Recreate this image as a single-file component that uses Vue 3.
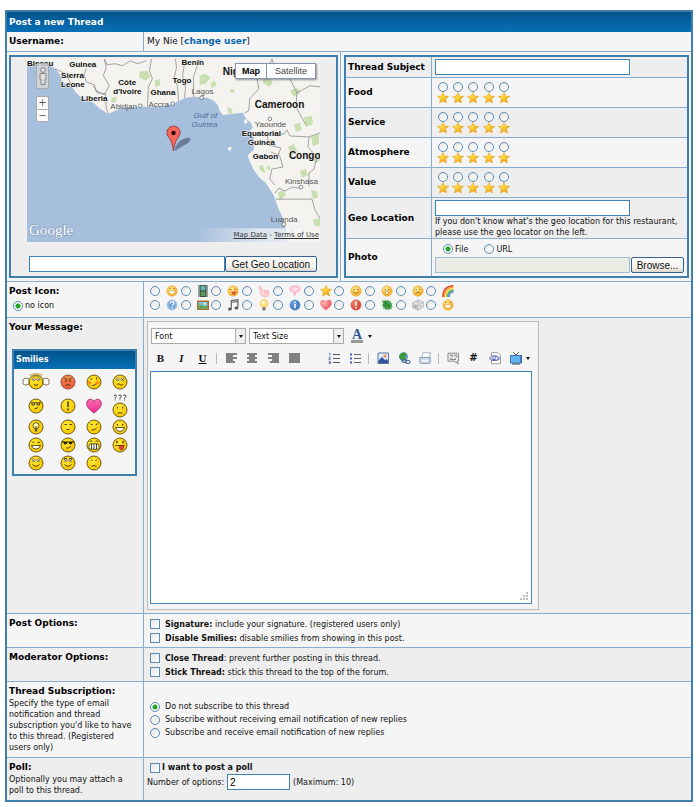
<script setup>
import { ref } from 'vue'

const disc = (fill, stroke) => `<circle cx="6" cy="6" r="5.2" fill="${fill}" stroke="${stroke}" stroke-width=".5"/>`
const faceEyes = '<circle cx="4.2" cy="4.6" r=".7" fill="#8a5a10"/><circle cx="7.8" cy="4.6" r=".7" fill="#8a5a10"/>'
const laugh = disc('url(#gold)', '#e8a020') + '<path d="M3 3.8q1-1 2 0M7 3.8q1-1 2 0" stroke="#a86c10" fill="none" stroke-width=".7"/><path d="M2.5 5.8h7q-.5 3.4-3.5 3.4T2.5 5.8z" fill="#fff" stroke="#c98a1a" stroke-width=".5"/>'
const starPath = '<path d="M6 .2l1.7 3.7 4.1.4-3.1 2.800.9 4L6 9.200l-3.600 1.900.9-4L.2 4.300l4.100-.4z" fill="url(#star)" stroke="#e2a526" stroke-width=".4"/>'

const postIcons = [
  { name: 'Laugh', art: laugh },
  { name: 'Film', art: '<path d="M1.5 0h9v12h-9z" fill="#3c4448"/><path d="M3.6 .8h4.8v4.6H3.6z" fill="#5fb7b0"/><path d="M3.6 6.4h4.8V11H3.6z" fill="#57a05a"/><path d="M2.5 .6v11M9.5 .6v11" stroke="#e8ecec" stroke-width=".9" stroke-dasharray="1 1"/>' },
  { name: 'Tongue', art: disc('url(#gold)', '#e8a020') + '<circle cx="3.8" cy="4.5" r=".8" fill="#8a5a10"/><path d="M7 4.6l2-.8" stroke="#8a5a10" stroke-width=".8"/><path d="M4 6.4h5q.3 3.4-2 3.4T4.800 7.400z" fill="#e0562c"/>' },
  { name: 'Thumbs up', art: '<path d="M1 1.5q1.500-.6 2 .7l1.500 3 4.800.3q1.600.3 1.600 1.500v2.800q-.2 1.600-2 1.600H5q-1.300 0-2-1.300L2.200 7.500z" fill="#fcd3d7" stroke="#f4a8b2" stroke-width=".7"/><path d="M6 7.200h4.500M6 9h4.300" stroke="#f4a8b2" stroke-width=".6"/>' },
  { name: 'Comment', art: '<path d="M6 .8c3 0 5.200 1.300 5.200 3.200S9 7.300 7 7.300L5.500 11 4.800 7.200C2.500 7 .8 5.800.8 4S3 .8 6 .8z" fill="#fcc9d6" stroke="#f3a0b8" stroke-width=".7"/><path d="M3.500 5.500l5-2.500" stroke="#fff" stroke-width="1"/>' },
  { name: 'Star', art: starPath },
  { name: 'Smile', art: disc('url(#gold)', '#e8a020') + faceEyes + '<path d="M3 6.500q3 3.600 6 0" fill="none" stroke="#9c6410" stroke-width=".9"/>' },
  { name: 'Surprised', art: disc('url(#gold)', '#e8a020') + faceEyes + '<ellipse cx="6" cy="7.600" rx="1.700" ry="1.900" fill="#fff3c8" stroke="#a86c10" stroke-width=".6"/>' },
  { name: 'Sad', art: disc('url(#gold)', '#e8a020') + faceEyes + '<path d="M3.400 8.400q2.600-2.600 5.200 0" fill="none" stroke="#9c6410" stroke-width=".9"/>' },
  { name: 'Rainbow', art: '<g fill="none" stroke-width="1.600"><path d="M.8 12C1 5 5 1 11.500.8" stroke="#e2483c"/><path d="M2.300 12C2.500 6 6 2.400 11.500 2.300" stroke="#f59a2c"/><path d="M3.800 12C4 7 7 4 11.500 3.800" stroke="#f6dc4c"/><path d="M5.300 12C5.500 8 8 5.500 11.500 5.300" stroke="#58b455"/><path d="M6.800 12C7 9.500 9 7 11.500 6.800" stroke="#4a86d6"/></g>' },
  { name: 'Question', art: disc('url(#blue)', '#a9c4e2') + '<path d="M4.300 4.600q0-1.700 1.800-1.700 1.700 0 1.700 1.500 0 1-1.700 1.900v.9M6.100 8.200v1.100" fill="none" stroke="#fff" stroke-width="1.200"/>' },
  { name: 'Picture', art: '<path d="M0 1.500h12v9.500H0z" fill="#a8702c"/><path d="M1.600 3h8.800v6.500H1.600z" fill="#7cc6e4"/><path d="M1.600 9.500V7l2.800-1.600L7 7.500l3.400-1v3z" fill="#5faa4c"/><circle cx="7.800" cy="4.800" r="1" fill="#fff6b0"/>' },
  { name: 'Music', art: '<path d="M4.300 9.500v-8l6.600-.8v7.600M4.300 3.300l6.600-.8" fill="none" stroke="#555" stroke-width="1.100"/><ellipse cx="2.900" cy="9.900" rx="1.900" ry="1.500" fill="#555"/><ellipse cx="9.400" cy="8.900" rx="1.900" ry="1.500" fill="#555"/>' },
  { name: 'Idea', art: '<circle cx="6" cy="4.600" r="4" fill="#fde48a" stroke="#eebc48" stroke-width=".6"/><circle cx="5" cy="3.500" r="1.500" fill="#fffbe2"/><path d="M4.400 8.300h3.200v2.400l-.8.900H5.200l-.8-.9z" fill="#7a7668"/>' },
  { name: 'Information', art: disc('url(#deepblue)', '#7aa6d6') + '<path d="M6 2.500v1.400M6 5v4.200" stroke="#fff" stroke-width="1.500"/>' },
  { name: 'Heart', art: '<path d="M6 11.200C1.500 7.600.4 5.800.4 3.900.4 2.200 1.700 1.100 3.200 1.100c1.200 0 2.200.6 2.800 1.800C6.600 1.700 7.600 1.100 8.800 1.100c1.500 0 2.800 1.100 2.800 2.800 0 1.900-1.100 3.700-5.600 7.300z" fill="url(#rose)" stroke="#ee8284" stroke-width=".4"/>' },
  { name: 'Exclamation', art: disc('url(#red)', '#e06a54') + '<path d="M6 2.300v4.200M6 7.800v1.600" stroke="#fff" stroke-width="1.600"/>' },
  { name: 'Leaf', art: '<path d="M1 1l2.200 1 1-1.500L5.500 2 7.200.7l.7 1.800 2-.4-.4 1.900 2 .5-1.100 1.700L12 7.500 10.200 8.300l.5 1.900-2-.4L8 11.500 6.400 10 4.500 11.200 4 9.200l-2.200.2.700-1.900L.7 6.300l1.600-1.200z" fill="#3f9c46"/><path d="M3 3l5.500 5.300M5 2.800v2.500M3 6.300l3 .2M7.800 5v2.500" stroke="#1f6d2b" stroke-width=".6"/>' },
  { name: 'Dice', art: '<path d="M.6 3.800L6.200 1l5.200 2v5L6 11.200.6 8.800z" fill="#e4e4e4" stroke="#a0a0a0" stroke-width=".6"/><path d="M.6 3.800L6 6v5.200L.6 8.800z" fill="#c9c9c9"/><path d="M6 6l5.400-3M6 6v5.200" stroke="#999" stroke-width=".5"/><circle cx="6" cy="3.300" r=".8" fill="#888"/><circle cx="3.300" cy="7.500" r=".8" fill="#777"/><circle cx="8.700" cy="7" r=".8" fill="#999"/>' },
  { name: 'Grin', art: laugh }
]

const ball = '<circle cx="8" cy="8" r="7" fill="url(#ball)" stroke="#6f5a10" stroke-width="1"/>'
const roundEyes = '<g fill="#fff" stroke="#4a3c08" stroke-width=".6"><circle cx="5.700" cy="5.300" r="1.500"/><circle cx="10.300" cy="5.300" r="1.500"/></g><path d="M5.400 5.500h.8M10 5.500h.8" stroke="#222" stroke-width=".9"/>'
const line = (d) => `<path d="${d}" fill="none" stroke="#3d3006" stroke-width=".9"/>`
const dots = '<path d="M5.500 5v1.600M10.500 5v1.600" stroke="#3d3006" stroke-width="1"/>'
const smilies = [
  { name: 'Angel', w: 28, vb: '-6 0 28 16', art: '<path d="M1 5q-5-2-6 1v4q2 2 6 0zM15 5q5-2 6 1v4q-2 2-6 0z" fill="#fff" stroke="#7c6a3c" stroke-width=".9"/>' + ball + '<ellipse cx="8" cy="1.200" rx="6" ry="1.400" fill="none" stroke="#b9942a" stroke-width=".9"/>' + roundEyes + line('M6 10.500q2 1.600 4 0') },
  { name: 'Angry', art: '<circle cx="8" cy="8" r="7" fill="url(#mad)" stroke="#96503c" stroke-width="1"/>' + line('M4.500 4l2.500 2M11.500 4L9 6M5 7h2M9 7h2M5.500 11.500q2.500-2 5 0') },
  { name: 'Blush', art: ball + '<circle cx="3.500" cy="8.800" r="2" fill="#ff9418"/><circle cx="11.500" cy="8.800" r="2" fill="#ff9418"/>' + line('M4.500 5h2M10.500 3.500v2M6 11.500q3 .5 4-2') },
  { name: 'Confused', art: ball + roundEyes + line('M5 10.500q1.500-1.500 3 0t3 0') },
  { name: 'Cool', art: ball + line('M2.500 4.800h11M4 5v2h2.500V5M9 5v2h2.500V5M6.500 11l3.500-1.500') },
  { name: 'Exclaim', art: ball + '<path d="M8 3.500v5.500M8 10.500v2" stroke="#3d3006" stroke-width="1.500"/>' },
  { name: 'Love', art: '<path d="M8 15C2 10.500.7 8 .7 5.300.7 2.900 2.500 1.300 4.500 1.300 6.200 1.300 7.400 2.300 8 3.900c.6-1.600 1.800-2.600 3.500-2.600 2 0 3.800 1.600 3.800 4C15.300 8 14 10.500 8 15z" fill="url(#pink)" stroke="#a02862" stroke-width=".9"/>' },
  { name: 'Huh', h: 24, vb: '0 -8 16 24', art: ball + dots + line('M5.500 11.500q2.500-2 5 0') + '<path d="M2-6q0-1 1.200-1T4.400-5.800q0 1-1.300 1.600v1M3.100-2.500v.9M6.800-6q0-1 1.200-1t1.200 1.200q0 1-1.300 1.600v1M7.900-2.500v.9M11.600-6q0-1 1.200-1T14-5.800q0 1-1.300 1.600v1M12.700-2.500v.9" fill="none" stroke="#444" stroke-width="1"/>' },
  { name: 'Idea', art: ball + '<circle cx="8" cy="6.700" r="3" fill="#fff8b4" stroke="#3d3006" stroke-width=".8"/><path d="M6.800 9.500h2.400v3H6.800z" fill="#555"/>' + line('M8 7v2.500') },
  { name: 'Sleepy', art: ball + line('M4.500 5.500h2.500M9.500 5.500h2.500M6.500 10.500h3') },
  { name: 'Skeptic', art: ball + line('M4.500 5l2.500 1M9.500 6l2.500-1.500M5.500 11q3 .5 5-2') },
  { name: 'Happy', art: ball + dots + '<path d="M3.500 8.500h9q-1 4-4.500 4t-4.500-4z" fill="#fff" stroke="#3d3006" stroke-width=".8"/>' },
  { name: 'Wink', art: ball + line('M4.500 5.500q1-1 2 0M9.500 5.500h2.500') + '<path d="M3.500 8.500h9q-1 3.600-4.500 3.600T3.500 8.500z" fill="#fff" stroke="#3d3006" stroke-width=".8"/>' },
  { name: 'Shades', art: ball + '<path d="M1.500 4.500h13v1H12.500q-.4 2-2 2T8.700 5.500H7.300q-.3 2-1.900 2t-2-2H1.500z" fill="#221c08"/>' + line('M6 11q3 .8 5-1.800') },
  { name: 'Grin', art: ball + line('M4 4.500q1.200-1.200 2.500 0M9.500 4.500q1.200-1.200 2.500 0') + '<rect x="3" y="6.800" width="10" height="5.500" rx="2" fill="#fff" stroke="#3d3006" stroke-width=".8"/>' + line('M5.500 7v5M8 7v5M10.500 7v5') },
  { name: 'Tongue', art: ball + line('M4 4l2 1.200-2 1M12 4l-2 1.200 2 1M3.500 8.500h9') + '<path d="M7.500 8.500h4v2.800q-.5 1.700-2 1.700t-2-1.700z" fill="#e23c3c" stroke="#7d1c1c" stroke-width=".6"/>' },
  { name: 'Roll eyes', art: ball + roundEyes + line('M4.500 9.500q3.500 3.500 7 0') },
  { name: 'Shifty', art: ball + roundEyes + line('M4 3.600h3M9 3.600h3M4.500 9.500q3.500 3.500 7 0') },
  { name: 'Sad', art: ball + line('M5.500 4.500l1 1.500M10.500 4.500l-1 1.500M5.500 11.500q2.500-2.200 5 0') }
]

const bars = (rows) => rows.map(([x, w], i) => `<path d="M${x} ${2 + i * 2}h${w}" stroke="#333" stroke-width="1.200"/>`).join('')
const tools = [
  { name: 'Bold', text: 'B', cls: 'bold' },
  { name: 'Italic', text: 'I', cls: 'italic' },
  { name: 'Underline', text: 'U', cls: 'under' },
  { sep: true },
  { name: 'Align left', art: bars([[1, 11], [1, 7], [1, 11], [1, 7], [1, 9]]) },
  { name: 'Align center', art: bars([[1, 10], [3, 6], [1, 10], [3, 6], [1, 10]]) },
  { name: 'Align right', art: bars([[1, 11], [5, 7], [1, 11], [5, 7], [3, 9]]) },
  { name: 'Justify', art: bars([[1, 11], [1, 11], [1, 11], [1, 11], [1, 11]]) },
  { gap: true },
  { name: 'Numbered list', art: '<path d="M5 2.500h7M5 6.500h7M5 10.500h7" stroke="#555" stroke-width="1.100"/><path d="M1 1.200h1v2.500M.6 5.300h1.800L.8 7.500h1.800M.6 9.300h1.800v2.400H.6M1 10.500h1.200" fill="none" stroke="#3e62b4" stroke-width=".8"/>' },
  { name: 'Bulleted list', art: '<path d="M5 2.500h7M5 6.500h7M5 10.500h7" stroke="#666" stroke-width="1.100"/><path d="M1 1.500h2v2H1zM1 5.500h2v2H1zM1 9.500h2v2H1z" fill="#3e62b4"/>' },
  { sep: true },
  { name: 'Insert image', art: '<path d="M1 1h10.500v10.500H1z" fill="#dfeafa" stroke="#4c6695" stroke-width=".9"/><path d="M1.500 11V8.500L5 5l3 3 1.500-1L11 9v2z" fill="#31559c"/><circle cx="8" cy="4" r="1.600" fill="#e88a4a"/>' },
  { name: 'Insert link', art: '<circle cx="5.500" cy="4.800" r="4.500" fill="#5c9fd0"/><path d="M1.500 3Q4-.5 7.500.8L9 3 6.500 4.500 7.500 7 4.500 9Q2 7.500 1.200 5z" fill="#3d9b37"/><g fill="none" stroke="#526f93" stroke-width="1.200"><rect x="4" y="7.500" width="4.500" height="2.800" rx="1.400"/><rect x="7.500" y="8.500" width="4.500" height="2.800" rx="1.400"/></g>' },
  { name: 'Insert e-mail', art: '<path d="M4 .8h7.500l-1.500 6H2.500z" fill="#fff" stroke="#7890b0" stroke-width=".7"/><path d="M.8 5.500h10.500v4.500q0 1.500-1.500 1.500H2.300Q.8 11.500.8 10z" fill="#cdd9ea" stroke="#7a8ba6" stroke-width=".8"/><path d="M2.500 8.500h6.500" stroke="#fff" stroke-width="1.300"/>' },
  { sep: true },
  { name: 'Quote', art: '<path d="M1 1.200h10.500v8H10l1.500 2.600L7 9.200H1z" fill="#eee" stroke="#777" stroke-width=".8"/><path d="M2.500 3.200h3v1.500l-2 2M6.800 3.200h3v1.500l-2 2M3 7.500h6" fill="none" stroke="#777" stroke-width=".9"/>' },
  { name: 'Code', text: '#', cls: 'hash' },
  { name: 'PHP code', art: '<path d="M2.500.7h6.500l2.500 2.500v8.500h-9z" fill="#fff" stroke="#8a8a9a" stroke-width=".8"/><ellipse cx="5.500" cy="6.200" rx="5.300" ry="2.900" fill="#6a70b8"/><path d="M2 8V5h1.200q.8 0 .8.800t-.8.800H2M5 4.200v3M5 5.600h1.300v1.600M7.500 8V5h1.200q.8 0 .8.800t-.8.800H7.500" fill="none" stroke="#fff" stroke-width=".7"/>' },
  { name: 'Insert video', art: '<path d="M3 0L6 3 9 0" fill="none" stroke="#555" stroke-width=".9"/><path d="M0 3h12v8.500H0z" fill="#3b78b8"/><path d="M1 4h9v6.500H1z" fill="#63b2ec"/><path d="M2 11.500h8v1H2z" fill="#444"/>' }
]

const ratings = ['Food', 'Service', 'Atmosphere', 'Value']
const scores = ref({ Food: null, Service: null, Atmosphere: null, Value: null })
const photoSource = ref('file')
const postIcon = ref('none')
const subscription = ref('0')
const pollOptions = ref('2')
const subscriptions = [
  'Do not subscribe to this thread',
  'Subscribe without receiving email notification of new replies',
  'Subscribe and receive email notification of new replies'
]
const postOptions = [
  { id: 'signature', title: 'Signature:', text: ' include your signature. (registered users only)' },
  { id: 'nosmilies', title: 'Disable Smilies:', text: ' disable smilies from showing in this post.' }
]
const modOptions = [
  { id: 'close', title: 'Close Thread', text: ': prevent further posting in this thread.' },
  { id: 'stick', title: 'Stick Thread:', text: ' stick this thread to the top of the forum.' }
]

const boldLabels = [
  [0, 7, 8, 'Bissau'], [42, 8, 8, 'Guinea'], [34, 19, 8, 'Sierra'], [34, 28, 8, 'Leone'],
  [54, 42, 8, 'Liberia'], [91, 26, 8, 'Côte'], [86, 35, 8, "d'Ivoire"], [123, 36, 8, 'Ghana'],
  [145, 24, 8, 'Togo'], [154, 6, 8, 'Benin'], [195, 16, 10, 'Nig'], [227, 49, 10, 'Cameroon'],
  [214, 77, 8, 'Equatorial'], [220, 86, 8, 'Guinea'], [225, 100, 8, 'Gabon'], [261, 100, 10, 'Congo']
]
const cityLabels = [
  [83, 50, 'Abidjan'], [121, 48, 'Accra'], [164, 35, 'Lagos'], [227, 68, 'Yaounde'],
  [257, 125, 'Kinshasa'], [243, 163, 'Luanda']
]
const cityDots = [[113, 47], [145, 45], [174, 39], [242, 60], [273, 128], [256, 165]]
</script>

<template>
  <svg class="defs" aria-hidden="true">
    <defs>
      <radialGradient id="gold" cx=".4" cy=".35"><stop offset="0" stop-color="#fff0a0" /><stop offset="1" stop-color="#f6b93a" /></radialGradient>
      <radialGradient id="star" cx=".4" cy=".4"><stop offset="0" stop-color="#ffdf48" /><stop offset="1" stop-color="#efa91c" /></radialGradient>
      <radialGradient id="blue" cx=".5" cy=".5"><stop offset="0" stop-color="#4a86c8" /><stop offset="1" stop-color="#a5c6ea" /></radialGradient>
      <radialGradient id="deepblue" cx=".4" cy=".35"><stop offset="0" stop-color="#76a9e0" /><stop offset="1" stop-color="#3f7cc2" /></radialGradient>
      <radialGradient id="rose" cx=".35" cy=".3"><stop offset="0" stop-color="#ffb4b0" /><stop offset="1" stop-color="#f06a70" /></radialGradient>
      <radialGradient id="red" cx=".4" cy=".35"><stop offset="0" stop-color="#f28a74" /><stop offset="1" stop-color="#dc4a38" /></radialGradient>
      <radialGradient id="ball" cx=".4" cy=".35"><stop offset="0" stop-color="#ffec3c" /><stop offset="1" stop-color="#f8cc08" /></radialGradient>
      <linearGradient id="mad" x2="0" y2="1"><stop offset="0" stop-color="#e89048" /><stop offset="1" stop-color="#f8523c" /></linearGradient>
      <linearGradient id="pink" x2="0" y2="1"><stop offset="0" stop-color="#ff6cb4" /><stop offset="1" stop-color="#ee2a8e" /></linearGradient>
      <linearGradient id="fade"><stop offset="0" stop-color="#f5f5f5" stop-opacity="0" /><stop offset=".5" stop-color="#f5f5f5" stop-opacity=".7" /><stop offset="1" stop-color="#f5f5f5" stop-opacity=".8" /></linearGradient>
    </defs>
  </svg>

  <form class="thread" @submit.prevent>
    <h1 class="bar">Post a new Thread</h1>

    <div class="row">
      <div class="side mid"><strong class="title">Username:</strong></div>
      <div class="main mid user">My Nie [<a href="#">change user</a>]</div>
    </div>

    <div class="place">
      <div class="cell">
        <div class="box geo">
          <div class="map">
            <svg class="canvas" viewBox="0 0 292 183" preserveAspectRatio="xMidYMid slice" role="img" aria-label="Map of the Gulf of Guinea">
              <path d="M0 0h292v183H0z" fill="#a5bfdd" />
              <path d="M0 0V5L13 5 23 6 29 11 33 16 35 23 45 28 48 33 53 38 66 44 73 50 81 55 88 52 95 49 116 48 133 48 142 46 150 43 158 39 166 38 180 39 186 42 190 46 192 52 195 56 203 55 215 54 218 59 223 64 225 69 220 74 226 78 226 91 220 96 221 100 226 111 232 119 238 124 246 136 250 148 255 159 256 165 258 169 260 183H292V0z" fill="#f4f3ef" />
              <g fill="#c9dfaf">
                <path d="M112 13l8-1 3 6-5 4-6-3zM172 17l6-2 5 4-5 6-6 1zM183 24l4-2 2 4-5 4zM127 22l5-2 1 6-5 3zM200 48l4 2 1 5-5-1zM236 17l6 2 3 6-4 3-6-4zM262 32l7-3 4 4-7 5zM276 58l8-1 1 8-7 3zM266 65l6-1 2 7-6 2zM283 78l8-3v10l-6 2zM260 88l6-3 3 7-5 5zM231 107l4-1 3 8-5-2zM250 133l6-2 2 5-6 5zM272 112l6-2 2 6-6 3zM283 131l6 1 1 6-5 2zM285 160l7-1v8l-6-1zM284 96l8-3v8l-5 4zM84 39l5-1v5l-5 1zM54 14l4 3-2 3-4-2zM262 170l4 2 2 6-5-2zM215 5l6 1-1 4-5-1zM203 30l4 1-1 3-4-1zM243 80l4 1-2 4-3-2zM240 106l3 3-2 3-2-3z" />
              </g>
              <g fill="none" stroke="#8d8d8d" stroke-width=".8">
                <path d="M77 0l3 6 8-1 7 2 8-5 7 3 9-3M77 0l2 9-3 8 6 10-5 9-8-4-2-6-8-3-2-7 2-6M66 27l4 7 8 1 1 14 2 6M124 0l-2 12 3 8-4 8-1 20M148 0l1 9-2 9 3 10 1 14M157 5l-2 12 3 12-1 10M170 6l3-6M170 6l-4 12v20M28 10l10 5 6 10M244 0l-3 9-12 9 2 12-9 10-1 12-4 2M244 0l4 11 14 9 7 14-1 14 10 18M269 34l13-7 10 1M226 76l30-1 3-4 3 6 19 1 11-4M239 74l2 12 12 3-3 8M243 93l9 4 3 11-11 2-2 10 5 6M281 78l-1 10 9 10-3 12-5 4v13M247 134l4-5 6 3 7-4 8 1M248 140h36l3 11 5 8" />
              </g>
              <g fill="#f4f3ef"><path d="M216 61l3-1 1 4-3 1zM201 88l3 0-1 4-3-1z" /></g>
              <g class="city">
                <text v-for="c in cityLabels" :key="c[2]" :x="c[0]" :y="c[1]">{{ c[2] }}</text>
              </g>
              <circle v-for="(d, i) in cityDots" :key="i" :cx="d[0]" :cy="d[1]" r="1.8" fill="#fff" stroke="#666" stroke-width=".8" />
              <g class="sea"><text x="166" y="59">Gulf of</text><text x="164" y="68">Guinea</text></g>
              <g class="nation">
                <text v-for="(n, i) in boldLabels" :key="i" :x="n[0]" :y="n[1]" :font-size="n[2]">{{ n[3] }}</text>
              </g>
              <path d="M147 92q2-10 9-12 6-3 7 0 0 3-6 6z" fill="#53627a" opacity=".7" />
              <path d="M146 92q-1-9-5-14a6.600 6.600 0 1 1 10 0q-4 5-5 14z" fill="#f5665c" stroke="#8e332c" stroke-width=".8" />
              <circle cx="146" cy="74" r="2.200" fill="#2a0c0a" />
              <path d="M170 169h122v14H170z" fill="url(#fade)" />
              <text class="logo" x="2" y="176">Google</text>
            </svg>
            <div class="legal"><a href="#">Map Data</a> - <a href="#">Terms of Use</a></div>
            <div class="kind"><button type="button" class="on">Map</button><button type="button">Satellite</button></div>
            <button type="button" class="pegman" aria-label="Street view">
              <svg viewBox="0 0 10 22" width="10" height="22"><circle cx="5" cy="5" r="2.500" fill="#ddd" stroke="#888" /><path d="M2 8.500h6v6H7v5H3v-5H2z" fill="#ddd" stroke="#888" /></svg>
            </button>
            <div class="zoom"><button type="button">+</button><button type="button">−</button></div>
          </div>
          <div class="finder">
            <input type="text" class="field" aria-label="Address">
            <button type="button" class="push">Get Geo Location</button>
          </div>
        </div>
      </div>

      <div class="cell last">
        <div class="box details">
          <div class="item">
            <label class="name" for="subject">Thread Subject</label>
            <div class="value"><input id="subject" type="text" class="field fixed"></div>
          </div>
          <div v-for="r in ratings" :key="r" class="item rate">
            <span class="name">{{ r }}</span>
            <div class="value stars">
              <label v-for="n in 5" :key="n" class="star">
                <input v-model="scores[r]" type="radio" :name="r" :value="n" :aria-label="r + ' ' + n">
                <svg viewBox="0 0 12 12" width="12" height="12" v-html="starPath" />
              </label>
            </div>
          </div>
          <div class="item spot">
            <label class="name" for="geo">Geo Location</label>
            <div class="value">
              <input id="geo" type="text" class="field fixed">
              <p>If you don't know what's the geo location for this restaurant, please use the geo locator on the left.</p>
            </div>
          </div>
          <div class="item photo">
            <span class="name">Photo</span>
            <div class="value">
              <div class="source">
                <label><input v-model="photoSource" type="radio" name="source" value="file">File</label>
                <label><input v-model="photoSource" type="radio" name="source" value="url">URL</label>
              </div>
              <div class="upload">
                <input type="text" class="field fixed dim" aria-label="Photo file" readonly>
                <button type="button" class="push">Browse...</button>
              </div>
            </div>
          </div>
        </div>
      </div>
    </div>

    <div class="row icons">
      <div class="side">
        <strong class="title">Post Icon:</strong>
        <label class="noicon"><input v-model="postIcon" type="radio" name="icon" value="none">no icon</label>
      </div>
      <div class="main">
        <div class="picker">
          <label v-for="p in postIcons" :key="p.name">
            <input v-model="postIcon" type="radio" name="icon" :value="p.name" :aria-label="p.name">
            <svg viewBox="0 0 12 12" width="12" height="12" v-html="p.art" />
          </label>
        </div>
      </div>
    </div>

    <div class="row alt message">
      <div class="side">
        <label class="title" for="message">Your Message:</label>
        <div class="smilies">
          <h2>Smilies</h2>
          <div class="faces">
            <button v-for="s in smilies" :key="s.name" type="button" :aria-label="s.name">
              <svg :viewBox="s.vb || '0 0 16 16'" :width="s.w || 16" :height="s.h || 16" v-html="s.art" />
            </button>
          </div>
        </div>
      </div>
      <div class="main">
        <div class="editor">
          <div class="tools">
            <span class="pick"><select aria-label="Font"><option>Font</option></select><i class="arrow" /></span>
            <span class="pick"><select aria-label="Text size"><option>Text Size</option></select><i class="arrow" /></span>
            <button type="button" class="tint" aria-label="Text color"><span class="letter">A</span><i class="caret" /></button>
          </div>
          <div class="tools second">
            <template v-for="(t, i) in tools" :key="i">
              <i v-if="t.sep" class="sep" />
              <i v-else-if="t.gap" class="gap" />
              <button v-else type="button" class="tool" :class="t.cls" :aria-label="t.name">
                <template v-if="t.text">{{ t.text }}</template>
                <svg v-else viewBox="0 0 12 12" width="12" height="12" v-html="t.art" />
              </button>
            </template>
            <i class="caret" />
          </div>
          <div class="paper">
            <textarea id="message" />
            <svg class="grip" viewBox="0 0 9 9" width="9" height="9"><path d="M6 0h2v2H6zM3 3h2v2H3zM6 3h2v2H6zM0 6h2v2H0zM3 6h2v2H3zM6 6h2v2H6z" fill="#bbb" /></svg>
          </div>
        </div>
      </div>
    </div>

    <div class="row">
      <div class="side"><strong class="title">Post Options:</strong></div>
      <div class="main checks">
        <label v-for="o in postOptions" :key="o.id"><input type="checkbox" :name="o.id"><span><b>{{ o.title }}</b>{{ o.text }}</span></label>
      </div>
    </div>

    <div class="row alt">
      <div class="side"><strong class="title">Moderator Options:</strong></div>
      <div class="main checks">
        <label v-for="o in modOptions" :key="o.id"><input type="checkbox" :name="o.id"><span><b>{{ o.title }}</b>{{ o.text }}</span></label>
      </div>
    </div>

    <div class="row subscribe">
      <div class="side">
        <strong class="title">Thread Subscription:</strong>
        <p>Specify the type of email notification and thread subscription you'd like to have to this thread. (Registered users only)</p>
      </div>
      <div class="main options">
        <label v-for="(s, i) in subscriptions" :key="i"><input v-model="subscription" type="radio" name="subscription" :value="String(i)">{{ s }}</label>
      </div>
    </div>

    <div class="row alt poll">
      <div class="side">
        <strong class="title">Poll:</strong>
        <p>Optionally you may attach a poll to this thread.</p>
      </div>
      <div class="main">
        <label class="want"><input type="checkbox" name="poll"><b>I want to post a poll</b></label>
        <div class="count">
          <label for="count">Number of options:</label>
          <input id="count" v-model="pollOptions" type="text" class="field">
          <span>(Maximum: 10)</span>
        </div>
      </div>
    </div>
  </form>
</template>

<style>
body { background: #fff; }
</style>

<style scoped>
.defs { position: absolute; width: 0; height: 0; }
.thread, .thread * { box-sizing: border-box; }
.thread {
  margin: 10px 7px 4px 5px;
  border: 2px solid #3f7fae;
  font: 8px/11px "DejaVu Sans", sans-serif;
  color: #111;
  background: #f5f5f5;
}
.thread p { margin: 0; }
.thread button { font-family: inherit; padding: 0; border: 0; background: none; color: inherit; }
.thread svg { display: block; overflow: visible; }

.bar {
  margin: 0;
  padding: 0 2px;
  font-size: 9px;
  line-height: 20px;
  color: #fff;
  background: linear-gradient(#00548c, #0870b6);
}
.row { display: grid; grid-template-columns: 137px 1fr; border-bottom: 1px solid #86add0; background: #f5f5f5; }
.row:last-child { border-bottom: 0; }
.row.alt { background: #eee; }
.side { padding: 3px 2px; border-right: 1px solid #86add0; }
.side p { padding-right: 6px; }
.main { padding: 3px; min-width: 0; }
.side.mid, .main.mid { padding-top: 0; padding-bottom: 0; line-height: 19px; }
.title { display: block; font-size: 9px; font-weight: bold; line-height: 13px; color: #000; }
.mid .title { line-height: 19px; }
.user { font-size: 9px; }
.user a { font-weight: bold; color: #0a66ae; text-decoration: none; }

input[type="radio"], input[type="checkbox"] {
  appearance: none;
  flex: none;
  width: 10px;
  height: 10px;
  margin: 0;
  border: 1px solid #5b8bb5;
  background: linear-gradient(135deg, #e6e6e2, #fff);
}
input[type="radio"] { border-radius: 50%; }
input[type="radio"]:checked { background: radial-gradient(circle, #22a522 0 2px, #fff 3px); }
input[type="checkbox"]:checked { background: #22a522; }
.field {
  height: 16px;
  margin: 0;
  padding: 0 2px;
  border: 1px solid #4283b5;
  border-radius: 0;
  background: #fff;
  font: 10px "Liberation Sans", sans-serif;
}
.fixed { display: block; width: 195px; }
.dim { background: #ebebe4; border-color: #9cbdd8; }
.thread .push {
  height: 16px;
  border: 1px solid #35628f;
  border-radius: 2px;
  background: linear-gradient(#fff, #f2f1ec 70%, #dcd8ce);
  font: 10px/13px "Liberation Sans", sans-serif;
}

.place { display: grid; grid-template-columns: 334fr 350fr; border-bottom: 1px solid #86add0; }
.cell { display: grid; padding: 3px 2px; border-right: 1px solid #86add0; min-width: 0; }
.cell.last { padding: 3px; border-right: 0; }
.box { border: 2px solid #3f7fae; background: #eee; }
.geo { display: flex; flex-direction: column; padding: 2px 16px 4px; gap: 14px; }
.map { position: relative; overflow: hidden; }
.canvas { width: 100%; height: 183px; }
.nation { font-family: "Liberation Sans", sans-serif; font-weight: bold; fill: #111; paint-order: stroke; stroke: #f4f3ef; stroke-width: 1px; }
.city { font: 8px "Liberation Sans", sans-serif; fill: #555; }
.sea { font: italic 8px "Liberation Sans", sans-serif; fill: #4d6f96; }
.logo { font: 15px "Liberation Serif", serif; fill: #fff; paint-order: stroke; stroke: #7f95b0; stroke-width: 1px; }
.legal { position: absolute; right: 1px; bottom: 1px; font: 7px/11px "DejaVu Sans", sans-serif; color: #333; }
.legal a { color: #333; }
.kind { position: absolute; top: 4px; right: 4px; display: flex; border: 1px solid #8095b4; background: #fff; box-shadow: 1px 1px 2px #0006; }
.thread .kind button { width: 48px; height: 14px; font: 9px/14px "Liberation Sans", sans-serif; color: #444; }
.thread .kind .on { width: 31px; border-right: 1px solid #8095b4; font-weight: bold; color: #000; }
.thread .pegman { position: absolute; left: 9px; top: 4px; width: 13px; height: 26px; display: grid; place-items: center; border: 1px solid #aaa; border-radius: 2px; background: #d8d8d8cc; }
.zoom { position: absolute; left: 9px; top: 37px; width: 13px; border: 1px solid #aaa; border-radius: 2px; background: #fff; }
.thread .zoom button { display: block; width: 11px; height: 12px; font: 10px/12px "DejaVu Sans", sans-serif; color: #555; }
.thread .zoom button + button { border-top: 1px solid #aaa; }
.finder { display: flex; padding: 0 3px 0 2px; }
.finder .field { flex: 1; min-width: 0; }
.finder .push { width: 92px; }

.details { display: flex; flex-direction: column; background: #f5f5f5; }
.item { display: grid; grid-template-columns: 86px 1fr; border-bottom: 1px solid #86add0; }
.item:nth-child(odd) { background: #eee; }
.item.spot { background: #eee; }
.item.photo { flex: 1; border-bottom: 0; background: #f5f5f5; }
.name { display: flex; align-items: center; padding-left: 2px; border-right: 1px solid #86add0; font-size: 9px; font-weight: bold; color: #000; }
.value { padding: 2px 3px; }
.value.stars { display: grid; grid-template-columns: repeat(5, 1fr); width: 83px; padding: 4px 3px 3px; }
.star { display: grid; justify-items: center; }
.spot .value { padding: 2px 0 0 3px; }
.spot { min-height: 41px; }
.source { display: flex; gap: 16px; padding: 3px 8px 2px; }
.source label { display: flex; align-items: center; gap: 2px; height: 12px; }
.upload { display: flex; gap: 1px; }
.upload .push { width: 53px; }
.photo .value { padding-top: 1px; }

.icons { min-height: 36px; }
.noicon { display: flex; align-items: center; gap: 2px; height: 15px; padding-left: 4px; }
.picker { display: grid; grid-template-columns: repeat(10, 1fr); width: 310px; row-gap: 2px; padding-left: 3px; }
.picker label { display: flex; align-items: center; gap: 6px; }

.message { min-height: 295px; }
.smilies { margin: 15px 4px 0 3px; border: 2px solid #3f7fae; background: #f5f5f5; }
.smilies h2 { margin: 0; padding: 0 2px; font-size: 8px; line-height: 18px; color: #fff; background: linear-gradient(#00548c, #0870b6); }
.faces { display: grid; grid-template-columns: 38px repeat(3, 26px); grid-template-rows: 24px 23px 19px 18px 18px; justify-content: center; padding: 1px 0 2px; }
.faces button { display: grid; place-items: center; min-width: 0; }
.editor { width: 392px; max-width: 100%; padding: 5px 6px 5px 2px; border: 1px solid #b9b9b9; background: #f5f5f5; }
.tools { display: flex; align-items: center; gap: 3px; height: 18px; padding-left: 1px; }
.tools.second { gap: 0; height: 26px; padding: 0; }
.pick { position: relative; width: 95px; height: 16px; border: 1px solid #aaa; background: #fff; }
.pick select { appearance: none; width: 100%; height: 14px; padding: 0 12px 0 3px; border: 0; background: none; font: 8px "DejaVu Sans", sans-serif; color: #111; }
.arrow { position: absolute; right: 0; top: 0; width: 10px; height: 14px; display: grid; place-items: center; border-left: 1px solid #aaa; background: #eee; pointer-events: none; }
.arrow::after, .caret { content: ""; border: 2px solid transparent; border-top: 3px solid #111; border-bottom: 0; }
.thread .tint { display: flex; align-items: center; gap: 5px; padding-left: 4px; }
.letter { width: 12px; border-bottom: 3px solid #999; font: bold 14px/11px "Liberation Serif", serif; color: #34558f; }
.tool { display: grid; place-items: center; width: 21px; height: 18px; }
.thread .bold, .thread .italic, .thread .under { font: bold 11px/14px "Liberation Serif", serif; }
.thread .italic { font-style: italic; }
.thread .under { text-decoration: underline; }
.thread .hash { font: bold 10px/14px "DejaVu Sans", sans-serif; }
.sep { width: 1px; height: 11px; margin: 0 3px; background: #bbb; }
.gap { width: 19px; }
.paper { position: relative; }
.paper textarea { display: block; width: 100%; height: 233px; margin: 0; padding: 3px; border: 1px solid #4283b5; border-radius: 0; resize: none; font: 9px "DejaVu Sans", sans-serif; }
.grip { position: absolute; right: 3px; bottom: 3px; }

.main.checks { display: flex; flex-direction: column; padding-bottom: 2px; }
.checks label { display: flex; align-items: center; gap: 5px; height: 14px; padding-left: 3px; }
.checks span { white-space: pre-wrap; }
.subscribe { min-height: 76px; }
.options { display: flex; flex-direction: column; justify-content: center; }
.options label { display: flex; align-items: center; gap: 5px; height: 13px; padding-left: 3px; }
.want { display: flex; align-items: center; gap: 2px; height: 13px; padding-left: 3px; }
.count { display: flex; align-items: center; gap: 3px; }
.count .field { width: 63px; }
.poll .main, .poll .side { padding-bottom: 0; }
.poll { min-height: 42px; }
</style>
